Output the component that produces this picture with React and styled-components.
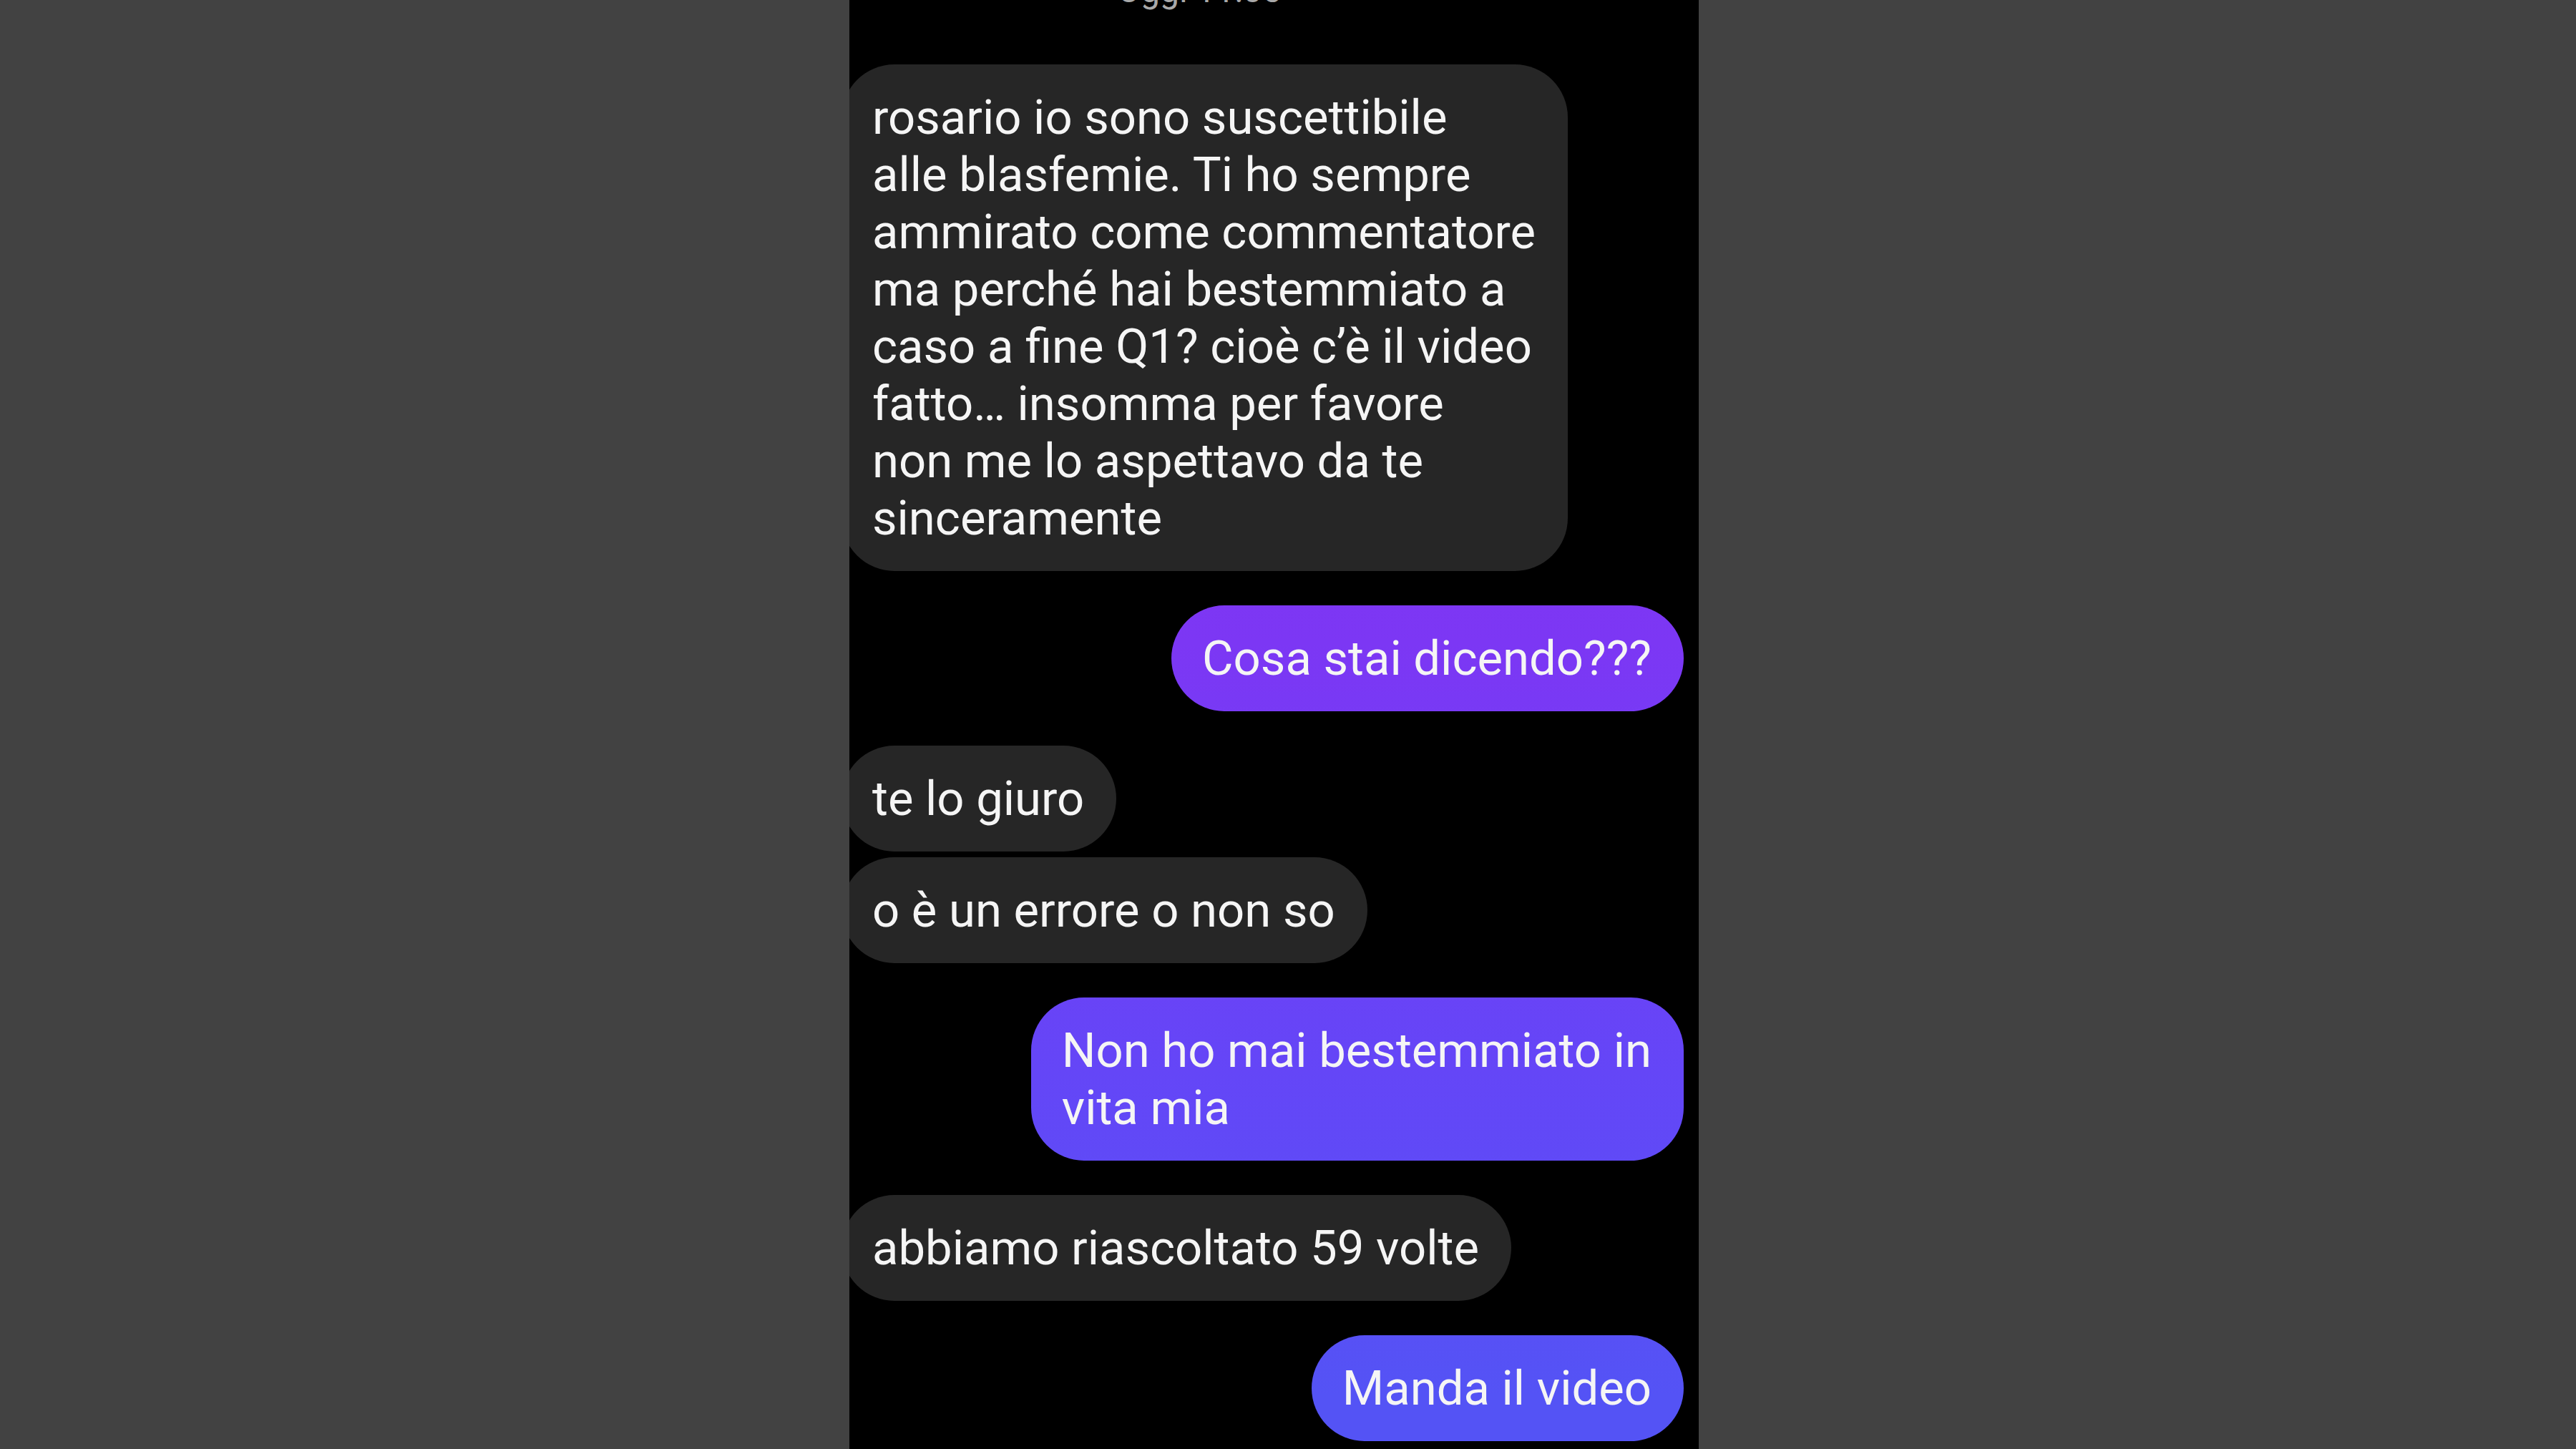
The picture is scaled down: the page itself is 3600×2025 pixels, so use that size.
import React from 'react';
import styled, { createGlobalStyle } from 'styled-components';

const GlobalStyle = createGlobalStyle`
  html, body {
    margin: 0;
    padding: 0;
    background: #424242;
    font-family: Roboto, "Noto Sans", "Liberation Sans", sans-serif;
  }
`;

const Page = styled.div`
  width: 3600px;
  height: 2025px;
  overflow: hidden;
  background: #424242;
`;

const Phone = styled.div`
  width: 1187px;
  height: 2025px;
  margin-left: 1187px;
  background: #000;
  overflow: hidden;
  display: flex;
  flex-direction: column;
`;

const Timestamp = styled.div`
  font-size: 48px;
  line-height: 48px;
  color: #a9a9a9;
  margin: -37px 0 79px 374px;
`;

const Thread = styled.div`
  display: flex;
  flex-direction: column;
`;

const Group = styled.div`
  display: flex;
  flex-direction: column;
  align-items: ${p => (p.mine ? 'flex-end' : 'flex-start')};
  gap: 8px;
  margin-bottom: 48px;
`;

// bolle in uscita: gradiente fisso sullo schermo come su instagram
const Bubble = styled.div`
  box-sizing: border-box;
  font-size: 67px;
  line-height: 80px;
  color: #f5f5f5;
  white-space: nowrap;
  padding: 34px 45px 34px 43px;
  border-radius: 74px;
  margin: ${p => (p.mine ? '0 21px 0 0' : '0 0 0 -11px')};
  background: ${p => (p.mine
    ? 'linear-gradient(180deg, #8a2ff0 0px, #7c37f4 900px, #6446f7 1500px, #5453f5 1950px) fixed'
    : '#262626')};
`;

const thread = [
  {
    mine: false,
    messages: [
      [
        'rosario io sono suscettibile',
        'alle blasfemie. Ti ho sempre',
        'ammirato come commentatore',
        'ma perché hai bestemmiato a',
        'caso a fine Q1? cioè c’è il video',
        'fatto… insomma per favore',
        'non me lo aspettavo da te',
        'sinceramente',
      ],
    ],
  },
  { mine: true, messages: [['Cosa stai dicendo???']] },
  { mine: false, messages: [['te lo giuro'], ['o è un errore o non so']] },
  { mine: true, messages: [['Non ho mai bestemmiato in', 'vita mia']] },
  { mine: false, messages: [['abbiamo riascoltato 59 volte']] },
  { mine: true, messages: [['Manda il video']] },
];

function App() {
  return (
    <>
      <GlobalStyle />
      <Page>
        <Phone>
          <Timestamp>Oggi 11:05</Timestamp>
          <Thread>
            {thread.map((group, i) => (
              <Group key={i} mine={group.mine}>
                {group.messages.map((lines, j) => (
                  <Bubble key={j} mine={group.mine}>
                    {lines.map((line, k) => (
                      <React.Fragment key={k}>
                        {k > 0 && <br />}
                        {line}
                      </React.Fragment>
                    ))}
                  </Bubble>
                ))}
              </Group>
            ))}
          </Thread>
        </Phone>
      </Page>
    </>
  );
}

export default App;
